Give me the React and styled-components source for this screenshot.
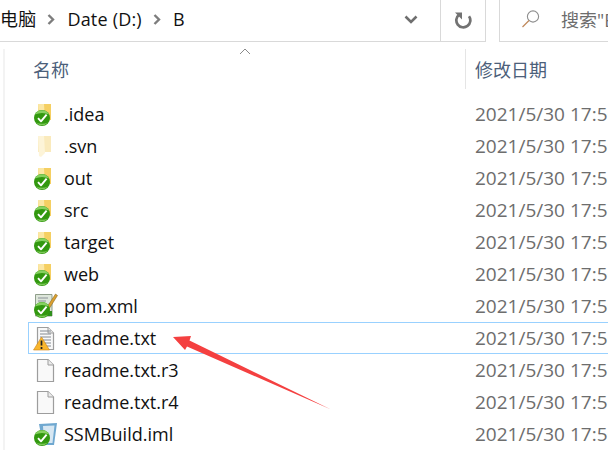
import React from "react";
import styled, { createGlobalStyle } from "styled-components";

const files = [
  { name: ".idea", icon: "folderOk" },
  { name: ".svn", icon: "folderHidden" },
  { name: "out", icon: "folderOk" },
  { name: "src", icon: "folderOk" },
  { name: "target", icon: "folderOk" },
  { name: "web", icon: "folderOk" },
  { name: "pom.xml", icon: "xml" },
  { name: "readme.txt", icon: "warn", selected: true },
  { name: "readme.txt.r3", icon: "blank" },
  { name: "readme.txt.r4", icon: "blank" },
  { name: "SSMBuild.iml", icon: "iml" },
];

const CheckBadge = () => (
  <g>
    <circle cx="10" cy="18" r="8" fill="#32980f" />
    <path d="M3 14.5 A8 8 0 0 1 17 14.5 Q10 11.5 3 14.5Z" fill="#86d160" />
    <path d="M4 22.5 A8 8 0 0 0 16 22.5 Q10 25 4 22.5Z" fill="#7cc858" />
    <path d="M6 18.2 L9 21.3 L14.6 14.6" fill="none" stroke="#fff" strokeWidth="1.9" strokeLinejoin="round" />
  </g>
);

const Folder = ({ pale }) => (
  <g opacity={pale ? 0.42 : 1}>
    <path d="M6 4 H19 V20 H6 Z" fill="#f5cf62" />
    <path d="M6 4 H12 L13 21 L9 25 L7 24 Z" fill="#fbe7a4" />
  </g>
);

const Sheet = ({ lines }) => (
  <g>
    <path d="M5.5 3.5 H16 L21.5 9 V25.5 H5.5 Z" fill="#f9f9f9" stroke="#9d9d9d" strokeWidth="1.2" />
    <path d="M16 3.5 V9 H21.5" fill="#ececec" stroke="#9d9d9d" />
    {lines &&
      [7, 10, 13, 16, 19, 22].map((y) => (
        <path key={y} d={`M8 ${y} H19`} stroke="#838a92" strokeWidth="1" />
      ))}
  </g>
);

const FileIcon = ({ kind }) => (
  <svg width="26" height="28" viewBox="0 0 26 28">
    {kind === "folderOk" && (
      <>
        <Folder />
        <CheckBadge />
      </>
    )}
    {kind === "folderHidden" && <Folder pale />}
    {kind === "blank" && <Sheet />}
    {kind === "warn" && (
      <>
        <Sheet lines />
        <path d="M9.5 13 L17.5 26 H1.5 Z" fill="#f8b62d" stroke="#c9811a" strokeWidth="0.6" />
        <path d="M9.5 16.5 V21.5 M9.5 23 V25" stroke="#222" strokeWidth="1.7" />
      </>
    )}
    {kind === "xml" && (
      <>
        <path d="M3.5 2.5 H20 V24 H3.5 Z" fill="#dde6da" stroke="#83947f" strokeWidth="0.9" />
        <path d="M6 6 H16 M6 9 H14" stroke="#8b9198" />
        <path d="M15 15 L23.5 2 L25.5 3.5 L17 17 L14 18.5 Z" fill="#dba02f" stroke="#7a5a1a" strokeWidth="0.5" />
        <path d="M17 19 H20 V24 H15 Z" fill="#2f8f1c" />
        <CheckBadge />
      </>
    )}
    {kind === "iml" && (
      <>
        <path d="M7 4 L25 3 L22 25 L11 25 Z" fill="#6fa8d0" />
        <path d="M11 6 L22.5 5.5 L20.5 23 L12 23 Z" fill="#d7e7f2" />
        <CheckBadge />
      </>
    )}
  </svg>
);

const CrumbChevron = () => (
  <ChevronBox>
    <svg width="8" height="11" viewBox="0 0 8 11">
      <path d="M1.5 1 L6 5.5 L1.5 10" fill="none" stroke="#7d7d7d" strokeWidth="2.4" />
    </svg>
  </ChevronBox>
);

const App = () => (
  <Page>
    <GlobalStyle />
    <TopBar>
      <Address>
        <Crumb>电脑</Crumb>
        <CrumbChevron />
        <Crumb>Date (D:)</Crumb>
        <CrumbChevron />
        <Crumb>B</Crumb>
        <Spacer />
        <svg width="14" height="9" viewBox="0 0 14 9">
          <path d="M1.5 1.5 L7 7 L12.5 1.5" fill="none" stroke="#6f6f6f" strokeWidth="2.6" />
        </svg>
      </Address>
      <Refresh>
        <svg width="18" height="18" viewBox="0 0 18 18">
          <path d="M15 5.2 A7 7 0 1 1 5 3.8" fill="none" stroke="#727272" strokeWidth="2.7" />
          <path d="M1 1.5 H8 V8.5 Z" fill="#727272" />
        </svg>
      </Refresh>
      <Search>
        <SearchIcon width="20" height="20" viewBox="0 0 20 20">
          <circle cx="12" cy="7.5" r="5.6" fill="none" stroke="#8f8f8f" strokeWidth="1.1" />
          <path d="M8 11.5 L1.5 18" stroke="#c0895c" strokeWidth="1.3" />
        </SearchIcon>
        <SearchText>搜索"B"</SearchText>
      </Search>
    </TopBar>
    <Pane>
      <Header>
        <SortCaret>
          <svg width="12" height="7" viewBox="0 0 12 7">
            <path d="M1 6 L6 1 L11 6" fill="none" stroke="#8a8a8a" strokeWidth="1" />
          </svg>
        </SortCaret>
        <NameHead>名称</NameHead>
        <DateHead>修改日期</DateHead>
      </Header>
      <List>
        {files.map((file) => (
          <Row key={file.name} $selected={file.selected}>
            <IconBox>
              <FileIcon kind={file.icon} />
            </IconBox>
            <Name>{file.name}</Name>
            <Modified>2021/5/30 17:50</Modified>
          </Row>
        ))}
      </List>
    </Pane>
    <Arrow width="165" height="80" viewBox="170 333 165 80">
      <path d="M173 337 L191 336 L189.5 340.5 L331 409.5 L187 346.5 L185 350 Z" fill="#f44040" />
    </Arrow>
  </Page>
);

const GlobalStyle = createGlobalStyle`
  html, body {
    margin: 0;
    padding: 0;
    background: #fff;
  }
`;

const Page = styled.div`
  position: relative;
  width: 608px;
  height: 470px;
  overflow: hidden;
  background: #fff;
  font-family: "Open Sans", "Noto Sans CJK SC", sans-serif;
  font-size: 18px;
  color: #111;
`;

const TopBar = styled.div`
  display: flex;
  height: 42px;
`;

const Address = styled.div`
  display: flex;
  align-items: center;
  width: 440px;
  padding: 0 22px 3px 0;
  box-sizing: border-box;
  border-bottom: 1px solid #d9d9d9;
`;

const Crumb = styled.span`
  font-size: 18px;
  line-height: 38px;
  letter-spacing: 0.2px;
  white-space: nowrap;
`;

const ChevronBox = styled.span`
  display: flex;
  margin: 0 12px 0 11px;
`;

const Spacer = styled.div`
  flex: 1;
`;

const Refresh = styled.div`
  display: flex;
  align-items: center;
  justify-content: center;
  width: 46px;
  padding-bottom: 2px;
  box-sizing: border-box;
  border-left: 1px solid #d9d9d9;
  border-right: 1px solid #d9d9d9;
  border-bottom: 1px solid #d9d9d9;
`;

const Search = styled.div`
  display: flex;
  align-items: center;
  flex: 1;
  margin-left: 13px;
  padding: 0 0 3px 21px;
  border-left: 1px solid #d9d9d9;
  border-bottom: 1px solid #d9d9d9;
  overflow: hidden;
`;

const SearchIcon = styled.svg`
  flex-shrink: 0;
`;

const SearchText = styled.span`
  margin-left: 20px;
  color: #6d6d6d;
  white-space: nowrap;
`;

const Pane = styled.div`
  margin: 7px 0 0 3px;
  border-left: 2px solid #f3f3f3;
`;

const Header = styled.div`
  position: relative;
  display: flex;
  align-items: center;
  height: 40px;
  color: #4c607a;
`;

const SortCaret = styled.span`
  position: absolute;
  left: 234px;
  top: -1px;
  display: flex;
`;

const NameHead = styled.div`
  width: 432px;
  padding-left: 28px;
`;

const DateHead = styled.div`
  align-self: stretch;
  display: flex;
  align-items: center;
  padding-left: 9px;
  border-left: 1px solid #e5e5e5;
  white-space: nowrap;
`;

const List = styled.div`
  margin-top: 9px;
  padding-left: 23px;
`;

const Row = styled.div`
  display: flex;
  align-items: center;
  height: 32px;
  box-sizing: border-box;
  border: 1px solid ${({ $selected }) => ($selected ? "#99d1ff" : "transparent")};
  border-right: 0;
`;

const IconBox = styled.div`
  display: flex;
  flex: none;
  width: 35px;
  padding-left: 3px;
  box-sizing: border-box;
`;

const Name = styled.div`
  flex: none;
  width: 411px;
  white-space: nowrap;
`;

const Modified = styled.div`
  flex: none;
  color: #6d6d6d;
  font-size: 19px;
  white-space: nowrap;
`;

const Arrow = styled.svg`
  position: absolute;
  left: 170px;
  top: 333px;
`;

export default App;
